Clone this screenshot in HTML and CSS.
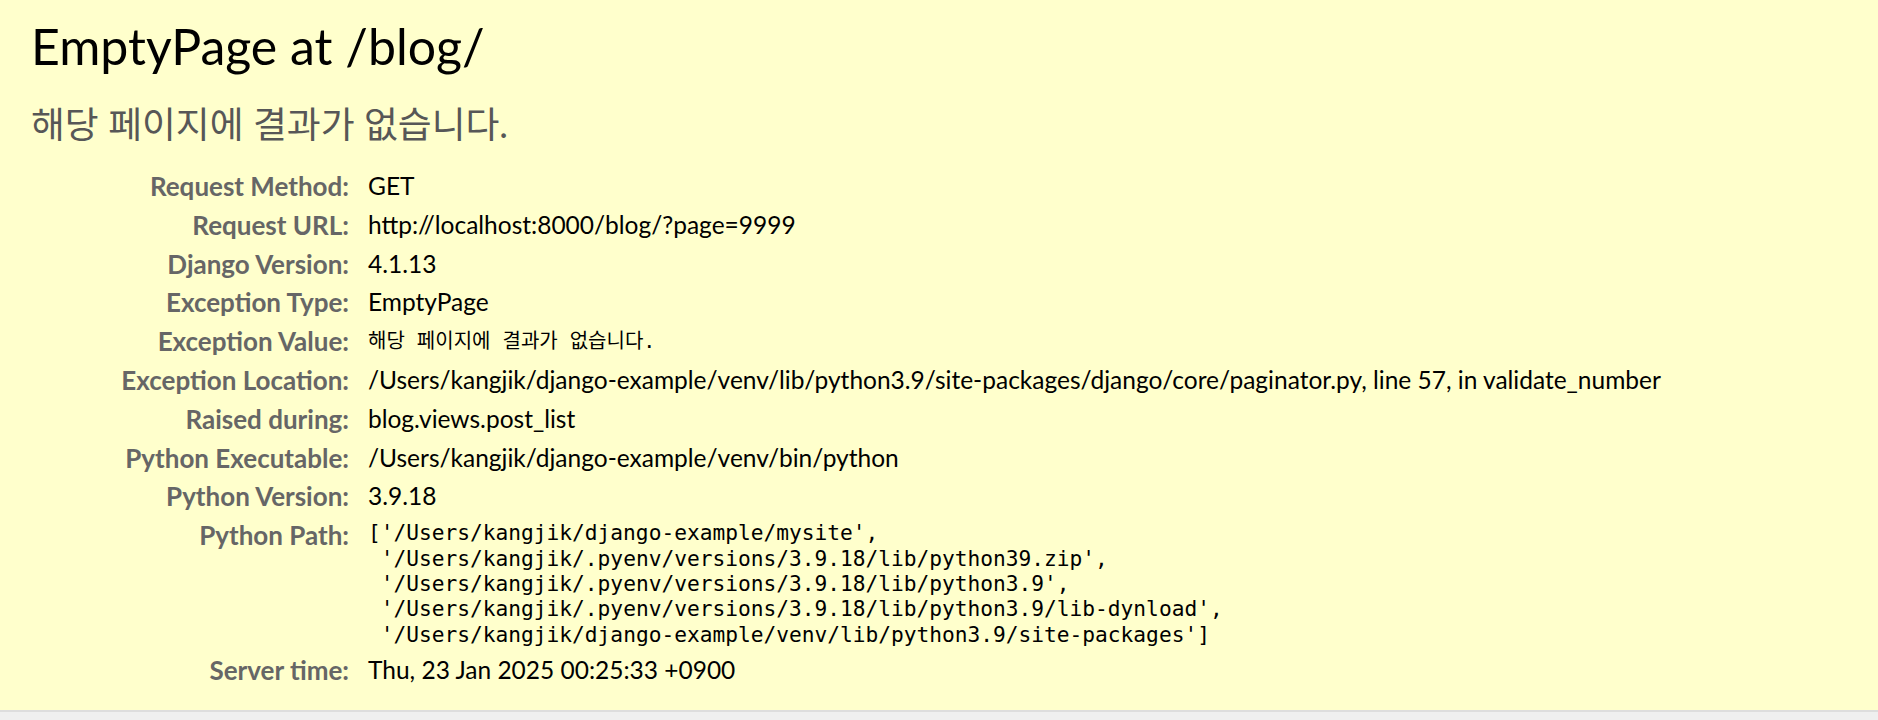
FILE: index.html
```
<!DOCTYPE html>
<html lang="ko">
<head>
<meta charset="utf-8">
<title>EmptyPage at /blog/</title>
<link rel="stylesheet" href="styles.css">
</head>
<body>
<div id="summary" class="summary">
  <h1 class="title">EmptyPage at /blog/</h1>
  <pre class="exception-value">해당 페이지에 결과가 없습니다.</pre>
  <table class="meta">
    <tbody>
      <tr><th class="key">Request Method:</th><td class="val">GET</td></tr>
      <tr><th class="key">Request URL:</th><td class="val">http://localhost:8000/blog/?page=9999</td></tr>
      <tr><th class="key">Django Version:</th><td class="val">4.1.13</td></tr>
      <tr><th class="key">Exception Type:</th><td class="val">EmptyPage</td></tr>
      <tr><th class="key">Exception Value:</th><td class="val"><pre class="mono mono-ko">해당 페이지에 결과가 없습니다.</pre></td></tr>
      <tr><th class="key">Exception Location:</th><td class="val"><span class="fname">/Users/kangjik/django-example/venv/lib/python3.9/site-packages/django/core/paginator.py</span>, line 57, in validate_number</td></tr>
      <tr><th class="key">Raised during:</th><td class="val">blog.views.post_list</td></tr>
      <tr><th class="key">Python Executable:</th><td class="val">/Users/kangjik/django-example/venv/bin/python</td></tr>
      <tr><th class="key">Python Version:</th><td class="val">3.9.18</td></tr>
      <tr><th class="key">Python Path:</th><td class="val"><pre class="mono">['/Users/kangjik/django-example/mysite',
 '/Users/kangjik/.pyenv/versions/3.9.18/lib/python39.zip',
 '/Users/kangjik/.pyenv/versions/3.9.18/lib/python3.9',
 '/Users/kangjik/.pyenv/versions/3.9.18/lib/python3.9/lib-dynload',
 '/Users/kangjik/django-example/venv/lib/python3.9/site-packages']</pre></td></tr>
      <tr><th class="key">Server time:</th><td class="val">Thu, 23 Jan 2025 00:25:33 +0900</td></tr>
    </tbody>
  </table>
</div>
<div class="below"></div>
</body>
</html>
```
FILE: styles.css
```
html, body { margin: 0; padding: 0; }
body {
  font-family: "Lato", "Noto Sans CJK KR", sans-serif;
  font-size: 26px;
  color: #000;
  background: #efefef;
}
.summary {
  background: #ffc;
  padding: 12px 31px 20px;
  border-bottom: 2px solid #ddd;
}
.title {
  margin: 0;
  font-size: 50px;
  font-weight: normal;
  line-height: 69px;
}
.exception-value {
  margin: 20px 0;
  font-family: "Lato", "Noto Sans CJK KR", sans-serif;
  font-size: 36.8px;
  line-height: 46px;
  color: #575757;
  white-space: pre-wrap;
}
.meta {
  border: none;
  border-collapse: collapse;
  width: 100%;
  background: transparent;
}
.key {
  width: 312px;
  text-align: right;
  vertical-align: top;
  color: #666;
  font-weight: bold;
  padding: 4px 13px 4px 6px;
  line-height: 30.8px;
  white-space: nowrap;
}
.val {
  vertical-align: top;
  padding: 4px 6px;
  font-size: 24.5px;
  line-height: 30.8px;
}
.mono {
  margin: 0;
  font-family: "DejaVu Sans Mono", "Noto Sans CJK KR", monospace;
  font-size: 21.2px;
  line-height: 25.4px;
  white-space: pre-wrap;
}
.mono-ko {
  font-size: 20px;
  line-height: 30.8px;
}
.below {
  height: 40px;
  background: #efefef;
}
```
